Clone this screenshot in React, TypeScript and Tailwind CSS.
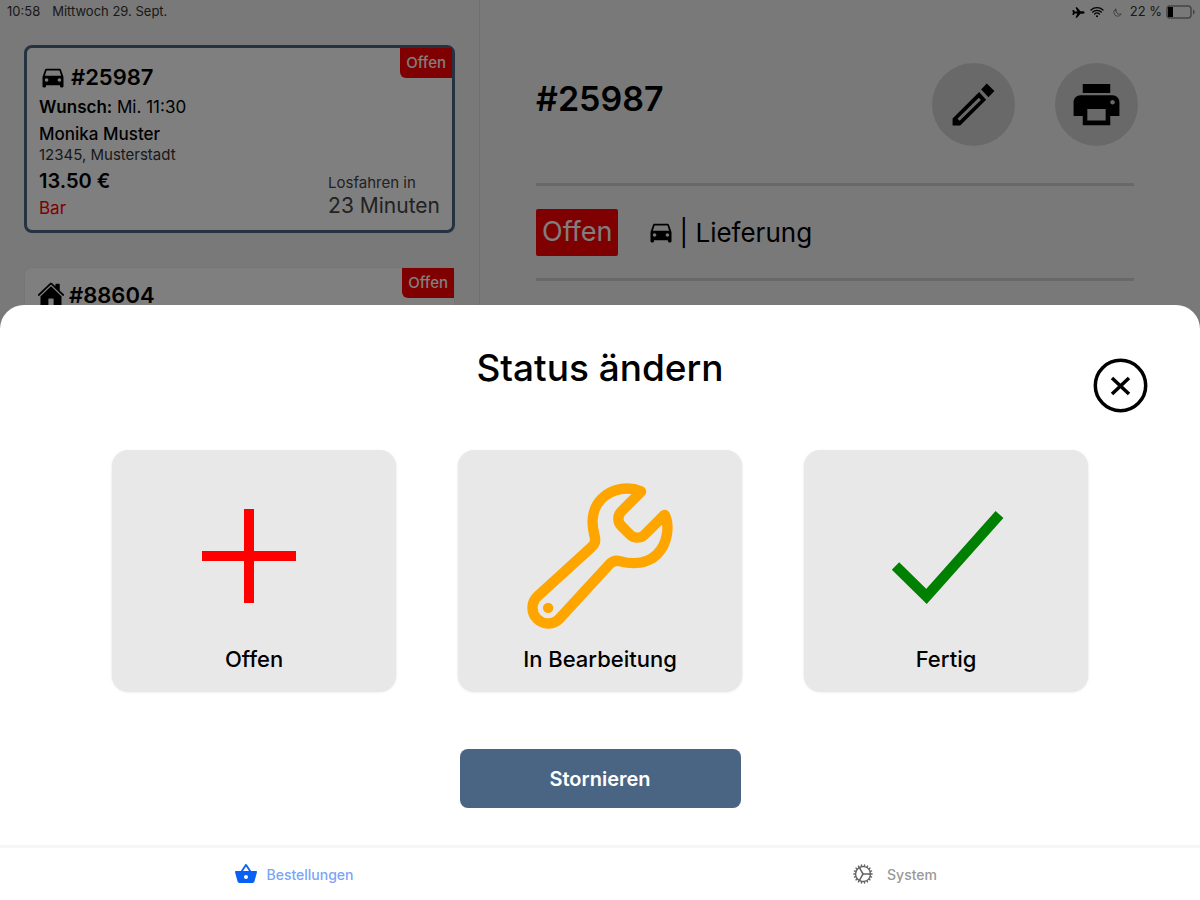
import { IoBuildOutline, IoCogOutline, IoHome, IoMoonOutline, IoWifi, IoAirplane } from "react-icons/io5";
import { MdDirectionsCar, MdPrint, MdShoppingBasket } from "react-icons/md";

function StatusBar() {
  return (
    <header className="flex h-6 items-center justify-between pl-[7px] pr-1 text-[13px] text-[#333]">
      <div className="flex gap-3">
        <span>10:58</span>
        <span>Mittwoch 29. Sept.</span>
      </div>
      <div className="flex items-center gap-1">
        <IoAirplane size={13} className="text-black" />
        <IoWifi size={16} className="text-black" />
        <IoMoonOutline size={9} className="mx-1" />
        <span>22 %</span>
        <svg width="30" height="14" viewBox="0 0 30 14">
          <rect x="1" y="1" width="24" height="12" rx="3" fill="none" stroke="#888" strokeWidth="1.5" />
          <rect x="2" y="2" width="5" height="10" fill="#000" />
          <path d="M27 4l2 3-2 3z" fill="#888" />
        </svg>
      </div>
    </header>
  );
}

function Badge() {
  return (
    <span className="absolute top-0 right-0 flex h-[30px] items-center rounded-bl-md bg-[#ff0000] px-[6px] text-[15px] font-medium text-white">
      Offen
    </span>
  );
}

function OrderList() {
  return (
    <section className="flex w-2/5 flex-col gap-[34px] border-r border-[#e0e0e0] pt-[45px] pr-6 pl-6">
      <article className="relative rounded-lg border-3 border-[#4a6583] bg-white px-3 pt-[13px] pb-[13px]">
        <Badge />
        <h2 className="flex h-8 items-center gap-1 text-[22px] font-semibold">
          <MdDirectionsCar size={28} />
          #25987
        </h2>
        <p className="text-[17px] leading-7">
          <b className="font-semibold">Wunsch:</b> Mi. 11:30
        </p>
        <p className="text-[17px] leading-[26px] font-medium">Monika Muster</p>
        <p className="text-[15px] leading-4 text-[#333]">12345, Musterstadt</p>
        <div className="flex items-end justify-between">
          <div>
            <p className="text-[20px] leading-9 font-semibold">13.50 €</p>
            <p className="text-[17px] leading-[18px] text-[#ff0000]">Bar</p>
          </div>
          <div className="text-[#444]">
            <p className="text-[15px] leading-6">Losfahren in</p>
            <p className="text-[21px] leading-[22px]">23 Minuten</p>
          </div>
        </div>
      </article>
      <article className="relative h-[188px] rounded-lg border border-[#ededed] bg-white px-3 pt-[11px]">
        <Badge />
        <h2 className="flex h-8 items-center gap-1 text-[22px] font-semibold">
          <IoHome size={28} />
          #88604
        </h2>
      </article>
    </section>
  );
}

function OrderDetail() {
  return (
    <section className="flex flex-1 flex-col pt-[63px] pr-[62px] pl-14">
      <div className="flex justify-between">
        <h1 className="pt-[9px] text-[34px] leading-[54px] font-semibold">#25987</h1>
        <div className="flex gap-10">
          <button aria-label="Bearbeiten" className="size-[83px] rounded-full bg-[#d2d2d2]">
            <svg viewBox="0 0 250 250" className="size-full">
              <path d="M165 62l23 22-18 19-22-23zM142 87l21 24-78 77H62v-21z" />
              <path d="M80 171l64-63" stroke="#d2d2d2" strokeWidth="9" />
            </svg>
          </button>
          <button aria-label="Drucken" className="flex size-[83px] items-center justify-center rounded-full bg-[#d2d2d2]">
            <MdPrint size={55} />
          </button>
        </div>
      </div>
      <div className="mt-[37px] mr-1 flex h-[98px] items-center border-y-3 border-[#d0d0d0]">
        <span className="flex h-[47px] items-center rounded-xs bg-[#ff0000] px-[6px] text-[27px] text-white">Offen</span>
        <MdDirectionsCar size={28} className="mr-1 ml-[29px]" />
        <span className="text-[26px]">| Lieferung</span>
      </div>
    </section>
  );
}

function StatusSheet() {
  return (
    <div className="absolute inset-0 flex flex-col justify-end bg-black/50">
      <div role="dialog" aria-labelledby="sheet-title" className="relative flex flex-col items-center rounded-t-3xl bg-white px-28 pt-9 pb-[37px]">
        <h2 id="sheet-title" className="text-[37px] leading-[54px] font-medium">Status ändern</h2>
        <button aria-label="Schließen" className="absolute top-[53px] right-[52px] size-[55px]">
          <svg viewBox="0 0 55 55" fill="none" stroke="#000" strokeWidth="3.5">
            <circle cx="27.5" cy="27.5" r="25.2" />
            <path d="M19 20l17 16M36 20l-17 16" />
          </svg>
        </button>
        <div className="mt-[55px] grid w-full grid-cols-3 gap-[62px]">
          <button className="flex h-[241px] flex-col items-center rounded-2xl bg-[#e8e8e8] pt-4 text-[22px] leading-[26px] font-medium shadow">
            <svg width="180" height="180" viewBox="0 0 180 180" stroke="#ff0000" strokeWidth="10">
              <path d="M38 90h94M85 43v94" />
            </svg>
            Offen
          </button>
          <button className="flex h-[241px] flex-col items-center rounded-2xl bg-[#e8e8e8] pt-4 text-[22px] leading-[26px] font-medium shadow">
            <IoBuildOutline size={166} color="#ffa500" className="my-[7px]" />
            In Bearbeitung
          </button>
          <button className="flex h-[241px] flex-col items-center rounded-2xl bg-[#e8e8e8] pt-4 text-[22px] leading-[26px] font-medium shadow">
            <svg width="180" height="180" viewBox="0 0 180 180" fill="none" stroke="#008000" strokeWidth="10.5">
              <path d="M39.5 100l31 30.5 73-82" />
            </svg>
            Fertig
          </button>
        </div>
        <button className="mt-[58px] h-[59px] w-[281px] rounded-lg bg-[#4a6583] text-[20px] font-semibold text-white">
          Stornieren
        </button>
      </div>
    </div>
  );
}

function TabBar() {
  return (
    <nav className="flex h-[55px] border-t-3 border-[#f6f6f6] bg-white text-[14px] font-medium">
      <a href="#bestellungen" className="flex flex-1 items-center justify-center gap-2 pr-3 text-[#7aa5f8]">
        <MdShoppingBasket size={24} className="text-[#0a60f5]" />
        Bestellungen
      </a>
      <a href="#system" className="flex flex-1 items-center justify-center gap-3 pr-3 text-[#999]">
        <IoCogOutline size={24} className="text-[#666]" />
        System
      </a>
    </nav>
  );
}

export default function App() {
  return (
    <div className="flex h-screen flex-col font-[Inter,sans-serif] text-black">
      <div className="relative flex flex-1 flex-col overflow-hidden bg-[#f3f3f3]">
        <StatusBar />
        <main className="-mt-6 flex flex-1">
          <OrderList />
          <OrderDetail />
        </main>
        <StatusSheet />
      </div>
      <TabBar />
    </div>
  );
}
